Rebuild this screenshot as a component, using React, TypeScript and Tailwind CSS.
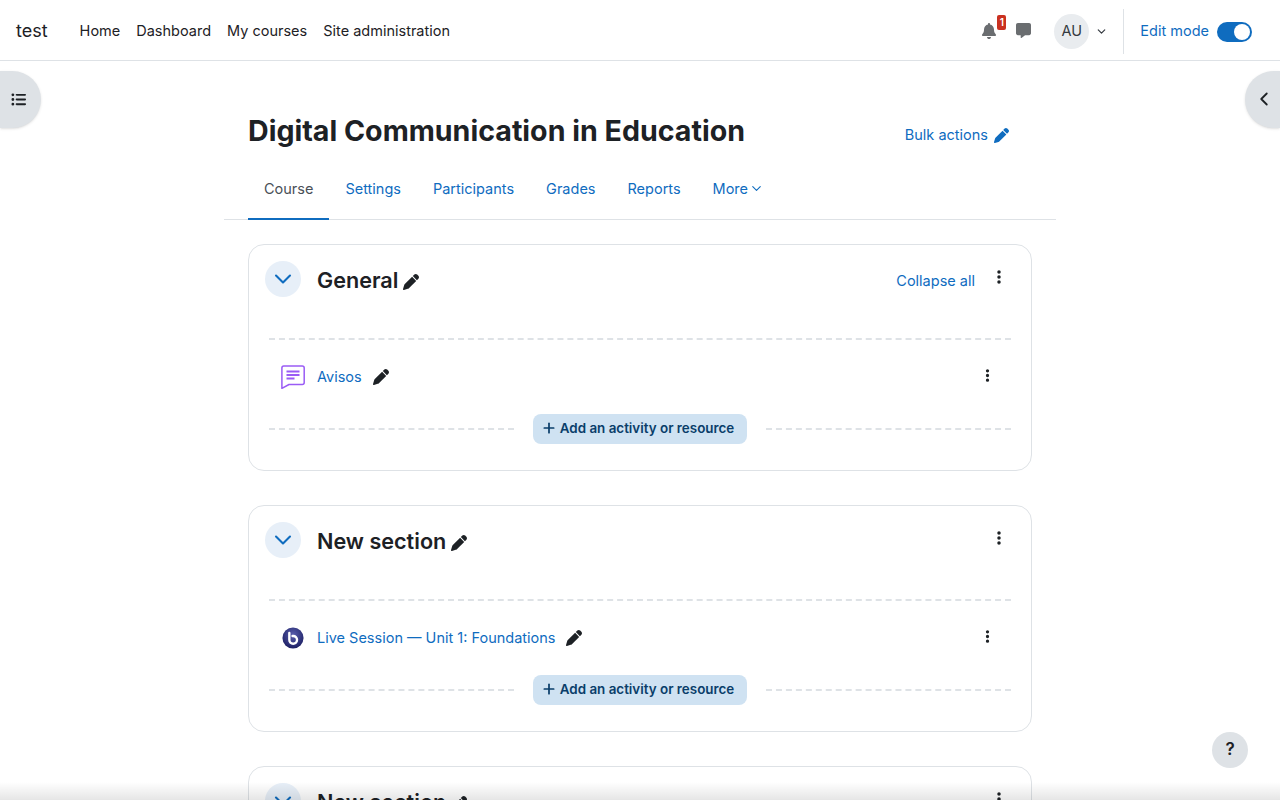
import { ChevronDown, ChevronLeft, Plus } from 'lucide-react';
import { FaBell, FaEllipsisVertical, FaListUl, FaMessage, FaPen } from 'react-icons/fa6';

const navLinks = ['Home', 'Dashboard', 'My courses', 'Site administration'];
const tabs = ['Settings', 'Participants', 'Grades', 'Reports'];

function Header() {
  return (
    <header className="flex h-[61px] shrink-0 items-center border-b border-[#dee2e6] bg-white pl-4 pr-7 pt-[2px]">
      <span className="mb-[2px] mr-[32px] text-[18px] text-[#1d2125]">test</span>
      <nav className="flex gap-4 text-[14.5px] text-[#1d2125]">
        {navLinks.map(link => (
          <span key={link}>{link}</span>
        ))}
      </nav>
      <div className="ml-auto flex items-center">
        <div className="relative mr-[19px]">
          <FaBell className="h-4 w-4 text-[#6a6d70]" />
          <span className="absolute -right-[9px] -top-[8px] flex h-[15px] w-[9px] items-center justify-center rounded-[2px] bg-[#ca3120] text-[10px] font-semibold text-white">
            1
          </span>
        </div>
        <FaMessage className="mb-[1px] mr-[23px] h-[15px] w-[15px] text-[#6a6d70]" />
        <div className="flex h-[35px] w-[35px] items-center justify-center rounded-full bg-[#e9ecef] text-[14.5px] text-[#343a40]">
          AU
        </div>
        <ChevronDown className="ml-[6px] h-[13px] w-[13px] text-[#343a40]" strokeWidth={2.2} />
        <div className="ml-[15px] h-[45px] w-px bg-[#dee2e6]" />
        <span className="ml-4 text-[14.5px] text-[#0f6cbf]">Edit mode</span>
        <div className="ml-2 mt-px flex h-5 w-[35px] items-center justify-end rounded-full bg-[#0f6cbf] pr-[2px]">
          <div className="h-4 w-4 rounded-full bg-white" />
        </div>
      </div>
    </header>
  );
}

function AddActivity() {
  return (
    <div className="flex items-center">
      <div className="flex-1 border-t-2 border-dashed border-[#dee2e6]" />
      <div className="mx-[19px] flex h-[30px] w-[214px] items-center justify-center gap-[3px] rounded-[8px] bg-[#cfe2f2] pb-[2px] pr-[5px] text-[13.4px] font-semibold text-[#0a3e6a]">
        <Plus className="h-4 w-4" strokeWidth={2.6} />
        Add an activity or resource
      </div>
      <div className="flex-1 border-t-2 border-dashed border-[#dee2e6]" />
    </div>
  );
}

function ForumIcon() {
  return (
    <svg viewBox="0 0 24 24" className="h-6 w-6" fill="none" stroke="#9a5cf5" strokeWidth="1.5" strokeLinejoin="round">
      <path d="M2.8 1h18.4a2 2 0 0 1 2 2v14.5a2 2 0 0 1-2 2H8L.9 23.3V3a2 2 0 0 1 1.9-2z" />
      <path d="M5.5 6.5h13M5.5 10h13M5.5 13.5h8" strokeWidth="1.8" />
    </svg>
  );
}

function BbbIcon() {
  return (
    <svg viewBox="0 0 24 24" className="h-[22px] w-[22px]">
      <defs>
        <radialGradient id="bbb" cx="50%" cy="35%" r="65%">
          <stop offset="0%" stopColor="#5a5fae" />
          <stop offset="100%" stopColor="#1c1f63" />
        </radialGradient>
      </defs>
      <circle cx="12" cy="12" r="11.5" fill="url(#bbb)" />
      <path d="M8 6.5v7.5a4.2 4.2 0 1 0 4.2-4.2h-.7" fill="none" stroke="#fff" strokeWidth="2.6" strokeLinecap="round" />
    </svg>
  );
}

interface SectionProps {
  title: string;
  activity?: string;
  icon?: React.ReactNode;
  collapseAll?: boolean;
}

function Section({ title, activity, icon, collapseAll }: SectionProps) {
  return (
    <section className="h-[227px] shrink-0 rounded-[16px] border border-[#dee2e6] bg-white pl-4 pr-5 pt-4">
      <div className="flex h-9 items-center">
        <div className="flex h-9 w-9 items-center justify-center rounded-full bg-[#e7eff8]">
          <ChevronDown className="h-7 w-7 text-[#0f6cbf]" strokeWidth={1.8} />
        </div>
        <h3 className="ml-4 mt-[2px] text-[21.6px] font-semibold text-[#1d2125]">{title}</h3>
        <FaPen className="ml-[5px] mt-[6px] h-4 w-4 text-[#1d2125]" />
        {collapseAll && <span className="ml-auto mt-[4px] text-[14.5px] text-[#0f6cbf]">Collapse all</span>}
        <FaEllipsisVertical className={`${collapseAll ? 'ml-[16px]' : 'ml-auto'} mb-[4px] mr-[4px] h-4 w-4 text-[#1d2125]`} />
      </div>
      <div className="ml-1 mt-[41px] border-t-2 border-dashed border-[#dee2e6]" />
      <div className="ml-1 flex h-[74px] items-center pl-3 pr-[16px]">
        <div className="flex w-6 justify-center">{icon}</div>
        <span className="ml-3 text-[14.5px] text-[#0f6cbf]">{activity}</span>
        <FaPen className="ml-[11px] h-4 w-4 text-[#1d2125]" />
        <FaEllipsisVertical className="mb-[4px] ml-auto h-[15px] w-[15px] text-[#1d2125]" />
      </div>
      <div className="ml-1">
        <AddActivity />
      </div>
    </section>
  );
}

export default function App() {
  return (
    <div className="relative flex h-screen flex-col overflow-hidden bg-white font-['Inter',sans-serif]">
      <Header />

      <main className="mx-auto flex w-[832px] flex-col">
        <div className="flex items-center justify-between pl-6 pr-[47px] pt-[50px]">
          <h1 className="text-[28.6px] font-bold leading-[40px] text-[#1d2125]">Digital Communication in Education</h1>
          <div className="mt-2 flex items-center gap-[6px] text-[14.5px] text-[#0f6cbf]">
            Bulk actions
            <FaPen className="h-[15px] w-[15px]" />
          </div>
        </div>

        <div className="mt-[6px] flex h-[63px] shrink-0 border-b border-[#dee2e6] pl-6 text-[14.5px]">
          <span className="-mb-px flex items-center border-b-2 border-[#0f6cbf] px-4 pt-[2px] text-[#495057]">Course</span>
          {tabs.map(tab => (
            <span key={tab} className="-mb-px flex items-center border-b-2 border-transparent px-4 pt-[2px] text-[#0f6cbf]">
              {tab}
            </span>
          ))}
          <span className="-mb-px flex items-center gap-[1px] border-b-2 border-transparent px-4 pt-[2px] text-[#0f6cbf]">
            More
            <ChevronDown className="h-[15px] w-[15px]" strokeWidth={1.8} />
          </span>
        </div>

        <div className="mt-6 flex flex-col gap-[34px] px-6">
          <Section title="General" activity="Avisos" icon={<ForumIcon />} collapseAll />
          <Section title="New section" activity="Live Session — Unit 1: Foundations" icon={<BbbIcon />} />
          <Section title="New section" activity="" />
        </div>
      </main>

      {/* Drawer toggles */}
      <div className="absolute left-0 top-[71px] flex h-[57px] w-[41px] items-center justify-center rounded-r-full bg-[#dee2e6] pr-[5px] shadow-sm">
        <FaListUl className="h-[15px] w-[15px] text-[#1d2125]" />
      </div>
      <div className="absolute right-0 top-[71px] flex h-[57px] w-[35px] items-center justify-center rounded-l-full bg-[#dee2e6] pb-[2px] pl-[3px] shadow-sm">
        <ChevronLeft className="h-[22px] w-[22px] text-[#1d2125]" strokeWidth={2} />
      </div>

      <div className="absolute left-[1212px] top-[732px] flex h-9 w-9 items-center justify-center rounded-full bg-[#dee2e6] text-[17px] font-semibold text-[#1d2125]">
        ?
      </div>

      {/* Footer shadow at the window edge */}
      <div className="pointer-events-none absolute inset-x-0 bottom-0 h-[18px] bg-gradient-to-t from-black/10 to-transparent" />
    </div>
  );
}
